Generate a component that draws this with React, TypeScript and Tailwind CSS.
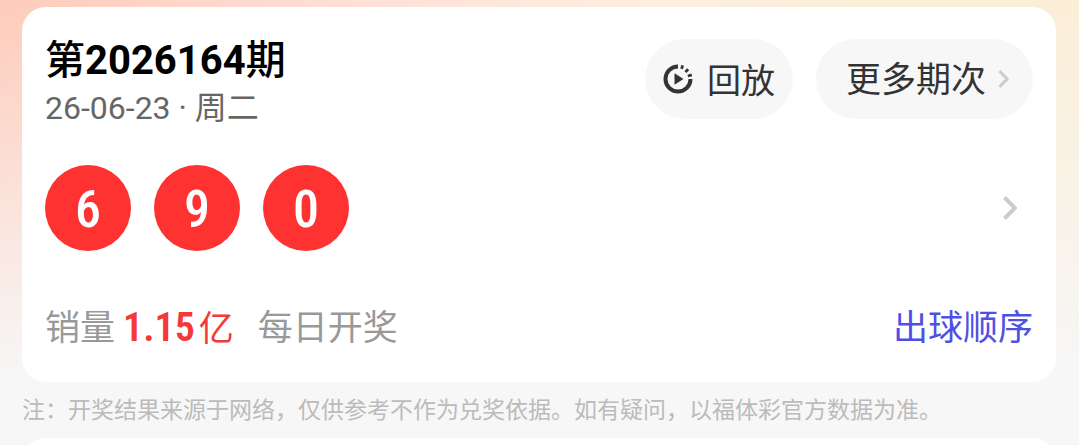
const numbers = [6, 9, 0];

function ReplayIcon() {
  return (
    <svg viewBox="0 0 30 30" className="size-[30px]" fill="none" aria-hidden="true">
      <path d="M15 2.5A12.5 12.5 0 1 0 27.5 15" stroke="currentColor" strokeWidth="4" />
      <path
        d="M18.6 4.9 19.6 1.3M22.4 8 25.2 5.2M24.8 12 28.8 10.8"
        stroke="currentColor"
        strokeWidth="2.8"
      />
      <path d="M11.5 9.2 20.5 15 11.5 20.8Z" fill="currentColor" />
    </svg>
  );
}

function Chevron({ className }: { className: string }) {
  return (
    <svg viewBox="0 0 14 24" className={className} fill="none" aria-hidden="true">
      <path d="M1.5 1.5 12 12 1.5 22.5" stroke="#cccccc" strokeWidth="4" />
    </svg>
  );
}

export default function App() {
  return (
    <main
      lang="zh-CN"
      className="flex h-screen flex-col overflow-hidden bg-[linear-gradient(to_bottom,transparent,#f7f7f7_85%),linear-gradient(to_right,#fecbba,#fee1d8_35%,#feeee0_60%,#fbeed7_80%)] px-[22px] pt-[7px] font-['Roboto','Noto_Sans_CJK_SC',sans-serif]"
    >
      <section className="mr-px shrink-0 rounded-3xl bg-white px-[23px] pt-8 pb-[25px]">
        <header className="flex items-start justify-between">
          <div>
            <h1 className="text-[40px] leading-[44px] font-bold text-black">
              <span className="font-medium">第</span>2026164<span className="font-medium">期</span>
            </h1>
            <p className="text-[32px] leading-[50px] text-[#666666]">26-06-23 · 周二</p>
          </div>
          <div className="flex gap-[23px] text-[34px] text-[#333333]">
            <button className="flex h-20 items-center gap-3.5 rounded-full bg-[#f7f7f7] px-[18px]">
              <ReplayIcon />
              <span className="pt-1">回放</span>
            </button>
            <button className="flex h-20 items-center gap-3 rounded-full bg-[#f7f7f7] pr-6 pl-[30px] text-[35px]">
              <span className="pt-1">更多期次</span>
              <Chevron className="h-[18px] w-[11px]" />
            </button>
          </div>
        </header>

        <a href="#detail" className="mt-8 flex items-center justify-between pr-4">
          <ul className="flex gap-[23px]">
            {numbers.map((n) => (
              <li
                key={n}
                className="flex size-[86px] items-center justify-center rounded-full bg-[#ff3232] pt-1 font-['Roboto_Condensed','Roboto',sans-serif] text-[52px] font-medium text-white"
              >
                {n}
              </li>
            ))}
          </ul>
          <Chevron className="h-6 w-3.5" />
        </a>

        <footer className="mt-[50px] flex h-14 items-center text-[35px] leading-[56px] text-[#999999]">
          <span>销量</span>
          <span className="ml-2 text-[#f53838]">
            <b className="mr-1 font-['Roboto_Condensed','Roboto',sans-serif] text-[40px] font-semibold">1.15</b>亿
          </span>
          <span className="ml-6">每日开奖</span>
          <a href="#order" className="ml-auto text-[#4f4fe6]">
            出球顺序
          </a>
        </footer>
      </section>

      <p className="shrink-0 pt-0.5 text-[23px] leading-[54px] text-[#bbbbbb]">
        注：开奖结果来源于网络，仅供参考不作为兑奖依据。如有疑问，以福体彩官方数据为准。
      </p>

      <section className="mr-px h-96 shrink-0 rounded-3xl bg-white" />
    </main>
  );
}
